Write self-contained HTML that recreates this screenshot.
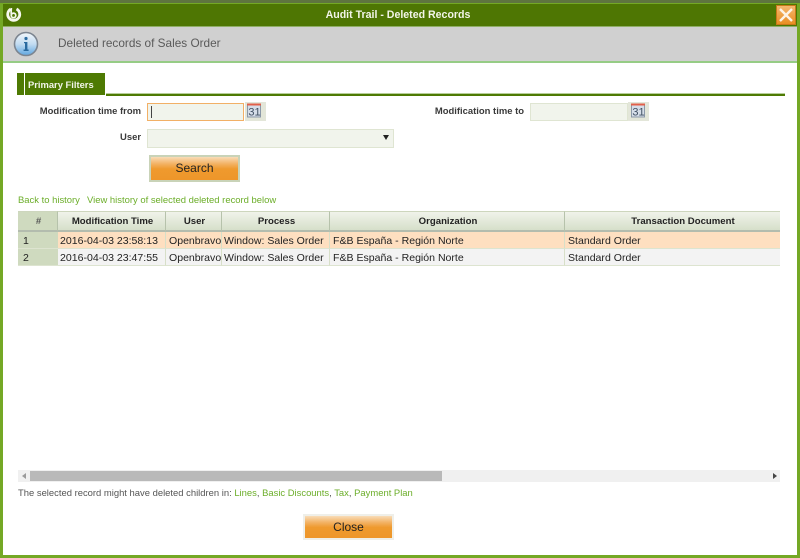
<!DOCTYPE html>
<html>
<head>
<meta charset="utf-8">
<style>
html,body{margin:0;padding:0;width:800px;height:558px;overflow:hidden;background:#fff;}
body{font-family:"Liberation Sans",sans-serif;position:relative;color:#333;filter:blur(0.35px);}
.a{position:absolute;white-space:nowrap;}
.lbl{font-size:9.45px;font-weight:bold;color:#3a3a3a;text-align:right;}
.in{position:absolute;background:#f1f4ec;border:1px solid #dfe5d2;box-sizing:border-box;}
.btn{position:absolute;box-sizing:border-box;background:linear-gradient(#f9dcb8 0,#f3b468 28%,#ef9a2e 52%,#ee962a 100%);text-align:center;color:#222;font-size:12px;}
.cal{position:absolute;width:21px;height:19px;background:#e3e6d9;}
.th{position:absolute;top:211px;height:21px;box-sizing:border-box;background:linear-gradient(#f0f3ea,#d6dfca);border-right:1px solid #b6c2ab;border-top:1px solid #cdd6bd;border-bottom:2px solid #b3bcae;font-size:9.6px;font-weight:bold;color:#222;text-align:center;line-height:19px;overflow:hidden;padding-left:2px;white-space:nowrap;}
.td{position:absolute;height:17px;box-sizing:border-box;font-size:10.55px;color:#222;line-height:18px;padding-left:2px;border-right:1px solid #d7dfc8;border-bottom:1px solid #dde4d0;overflow:hidden;white-space:nowrap;}
.r1{top:232px;background:#fedfc0;}
.r2{top:249px;background:#f3f3f3;}
.num{background:#cfdabf;padding-left:5px;border-right:none;}
a{color:#6cae2a;text-decoration:none;}
</style>
</head>
<body>
<div class="a" style="left:0;top:0;width:800px;height:3px;background:#5f7440;"></div>
<div class="a" style="left:0;top:3px;width:800px;height:555px;background:#74a825;"></div>
<div class="a" style="left:3px;top:4px;width:794px;height:551px;background:#fff;"></div>
<div class="a" style="left:3px;top:4px;width:794px;height:22px;background:#4e7603;"></div>
<div class="a" style="left:3px;top:26px;width:794px;height:1px;background:#8fae66;"></div>
<div class="a" style="left:3px;top:27px;width:794px;height:34px;background:#d0d0d0;"></div>
<div class="a" style="left:3px;top:61px;width:794px;height:2px;background:#96cc85;"></div>

<svg class="a" style="left:5px;top:6px" width="17" height="17" viewBox="0 0 17 17">
<path d="M5.6 3.2 A6 6 0 1 0 11.5 3" fill="none" stroke="#f6f8ee" stroke-width="2.8"/>
<circle cx="8.5" cy="9.4" r="2.3" fill="none" stroke="#f6f8ee" stroke-width="1.7"/>
<path d="M6.4 2 C6 5 6 7.5 6.5 9.5" stroke="#f6f8ee" stroke-width="1.7" fill="none"/>
</svg>
<div class="a" style="left:0;top:8px;width:796px;text-align:center;color:#f2f5e8;font-size:10.6px;font-weight:bold;line-height:15px;">Audit Trail - Deleted Records</div>
<svg class="a" style="left:776px;top:5px" width="20" height="20" viewBox="0 0 20 20">
<defs><linearGradient id="x" x1="0" y1="0" x2="0" y2="1"><stop offset="0" stop-color="#f4b870"/><stop offset="1" stop-color="#e98d20"/></linearGradient></defs>
<rect x="0.5" y="0.5" width="19" height="19" fill="url(#x)" stroke="#c9791a"/>
<path d="M4 4 L16 16 M16 4 L4 16" stroke="#fdf3e6" stroke-width="2.4"/>
</svg>

<svg class="a" style="left:13px;top:31px" width="26" height="26" viewBox="0 0 26 26">
<defs><linearGradient id="i" x1="0" y1="0" x2="0" y2="1"><stop offset="0" stop-color="#f2f7fb"/><stop offset="0.5" stop-color="#c3dcf1"/><stop offset="1" stop-color="#5ea6e0"/></linearGradient></defs>
<circle cx="13" cy="13" r="11.5" fill="url(#i)" stroke="#7c8590" stroke-width="1.6"/>
<circle cx="13" cy="7.5" r="1.6" fill="#2a6a9f"/>
<path d="M11 11 H14.4 V18.5 H15.6 V20 H10.6 V18.5 H12 V12.3 H11 Z" fill="#2a6a9f"/>
</svg>
<div class="a" style="left:58px;top:36px;font-size:11.8px;color:#5a5a5a;line-height:15px;">Deleted records of Sales Order</div>

<div class="a" style="left:17px;top:73px;width:7px;height:22px;background:#4e7a03;"></div>
<div class="a" style="left:25px;top:73px;width:80px;height:22px;background:#4e7a03;color:#f2f5ea;font-size:9.4px;font-weight:bold;line-height:23px;text-indent:3px;">Primary Filters</div>
<div class="a" style="left:106px;top:93px;width:679px;height:1px;background:#b7cf9a;"></div>
<div class="a" style="left:106px;top:94px;width:679px;height:2px;background:#4e7a03;"></div>

<div class="a lbl" style="left:20px;width:121px;top:105px;line-height:13px;">Modification time from</div>
<div class="in" style="left:147px;top:103px;width:97px;height:18px;border-color:#f2b066;"></div>
<div class="a" style="left:151px;top:106px;width:1px;height:12px;background:#444;"></div>
<div class="cal" style="left:245px;top:102px;"></div>
<svg class="a" style="left:246px;top:103px" width="16" height="16" viewBox="0 0 16 16">
<rect x="1.5" y="1" width="13" height="13" fill="#d5dde8" stroke="#8b98a8"/>
<rect x="1" y="0.5" width="14" height="2" fill="#e2604a"/>
<text x="8.5" y="12.4" font-family="Liberation Sans" font-size="11" text-anchor="middle" fill="#3f4f62">31</text>
</svg>

<div class="a lbl" style="left:410px;width:114px;top:105px;line-height:13px;">Modification time to</div>
<div class="in" style="left:530px;top:103px;width:98px;height:18px;"></div>
<div class="cal" style="left:628px;top:102px;"></div>
<svg class="a" style="left:630px;top:103px" width="16" height="16" viewBox="0 0 16 16">
<rect x="1.5" y="1" width="13" height="13" fill="#d5dde8" stroke="#8b98a8"/>
<rect x="1" y="0.5" width="14" height="2" fill="#e2604a"/>
<text x="8.5" y="12.4" font-family="Liberation Sans" font-size="11" text-anchor="middle" fill="#3f4f62">31</text>
</svg>

<div class="a lbl" style="left:60px;width:81px;top:131px;line-height:13px;">User</div>
<div class="in" style="left:147px;top:129px;width:247px;height:19px;"></div>
<div class="a" style="left:383px;top:135px;width:0;height:0;border-left:3px solid transparent;border-right:3px solid transparent;border-top:5px solid #222;"></div>

<div class="btn" style="left:149px;top:155px;width:91px;height:27px;border:2px solid #c9d3b8;line-height:23px;">Search</div>

<div class="a" style="left:18px;top:194px;font-size:9.45px;line-height:13px;"><a>Back to history</a></div>
<div class="a" style="left:87px;top:194px;font-size:9.45px;line-height:13px;"><a>View history of selected deleted record below</a></div>

<div class="th" style="left:18px;width:40px;background:#cfdabf;color:#555;">#</div>
<div class="th" style="left:58px;width:108px;">Modification Time</div>
<div class="th" style="left:166px;width:56px;">User</div>
<div class="th" style="left:222px;width:108px;">Process</div>
<div class="th" style="left:330px;width:235px;">Organization</div>
<div class="th" style="left:565px;width:215px;border-right:none;padding-left:0;"><div style="width:236px;">Transaction Document</div></div>

<div class="td r1 num" style="left:18px;width:40px;">1</div>
<div class="td r1" style="left:58px;width:108px;">2016-04-03 23:58:13</div>
<div class="td r1" style="left:166px;width:56px;padding-left:3px;">Openbravo</div>
<div class="td r1" style="left:222px;width:108px;">Window: Sales Order</div>
<div class="td r1" style="left:330px;width:235px;padding-left:3px;">F&amp;B España - Región Norte</div>
<div class="td r1" style="left:565px;width:215px;border-right:none;padding-left:3px;">Standard Order</div>

<div class="td r2 num" style="left:18px;width:40px;">2</div>
<div class="td r2" style="left:58px;width:108px;">2016-04-03 23:47:55</div>
<div class="td r2" style="left:166px;width:56px;padding-left:3px;">Openbravo</div>
<div class="td r2" style="left:222px;width:108px;">Window: Sales Order</div>
<div class="td r2" style="left:330px;width:235px;padding-left:3px;">F&amp;B España - Región Norte</div>
<div class="td r2" style="left:565px;width:215px;border-right:none;padding-left:3px;">Standard Order</div>

<div class="a" style="left:18px;top:470px;width:762px;height:12px;background:#f0f0f0;"></div>
<div class="a" style="left:30px;top:471px;width:412px;height:10px;background:#b9b9b9;"></div>
<div class="a" style="left:22px;top:473px;width:0;height:0;border-top:3px solid transparent;border-bottom:3px solid transparent;border-right:4px solid #9a9a9a;"></div>
<div class="a" style="left:773px;top:473px;width:0;height:0;border-top:3px solid transparent;border-bottom:3px solid transparent;border-left:4px solid #444;"></div>

<div class="a" style="left:18px;top:486px;font-size:9.43px;line-height:13px;color:#555;">The selected record might have deleted children in: <a>Lines</a>, <a>Basic Discounts</a>, <a>Tax</a>, <a>Payment Plan</a></div>

<div class="btn" style="left:303px;top:514px;width:91px;height:26px;border:2px solid #efefe9;line-height:22px;">Close</div>
</body>
</html>
